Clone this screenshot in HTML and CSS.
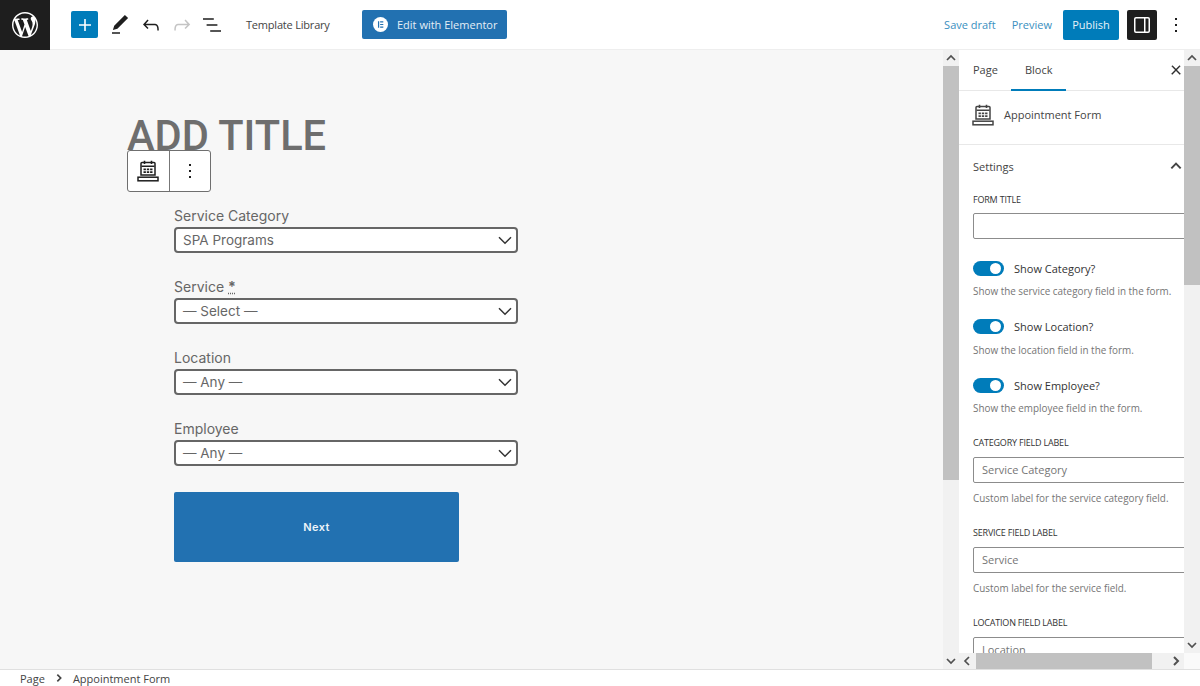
FILE: index.html
```html
<!DOCTYPE html>
<html>
<head>
<meta charset="utf-8">
<title>Edit Page</title>
<link rel="stylesheet" href="styles.css">
</head>
<body>
<svg class="defs" width="0" height="0">
  <symbol id="cal" viewBox="0 0 24 24">
    <path d="M6 3.500h12a1 1 0 0 1 1 1v11.500H5V4.500a1 1 0 0 1 1-1z" fill="none" stroke="currentColor" stroke-width="1.500"/>
    <path d="M8.500 1.800v3.200M15.500 1.800v3.200" stroke="currentColor" stroke-width="1.600"/>
    <path d="M5.500 6.500h13v1.500h-13z" fill="currentColor"/>
    <path d="M7.500 9.500h2.400v1.800H7.500zM10.800 9.500h2.400v1.800h-2.400zM14.100 9.500h2.400v1.800h-2.400zM7.500 12.200h2.400v1.800H7.500zM10.800 12.200h2.400v1.800h-2.400zM14.100 12.200h2.400v1.800h-2.400z" fill="currentColor"/>
    <rect x="2" y="18.200" width="20" height="3.600" fill="none" stroke="currentColor" stroke-width="1.500"/>
  </symbol>
  <symbol id="chev-down" viewBox="0 0 12 12"><path d="M2 4l4 4 4-4" fill="none" stroke="currentColor" stroke-width="1.700"/></symbol>
  <symbol id="chev-select" viewBox="0 0 12 12"><path d="M1.500 4l4.500 4.500L10.500 4" fill="none" stroke="currentColor" stroke-width="1.100"/></symbol>
  <symbol id="chev-up" viewBox="0 0 12 12"><path d="M2 8l4-4 4 4" fill="none" stroke="currentColor" stroke-width="1.700"/></symbol>
  <symbol id="chev-left" viewBox="0 0 12 12"><path d="M8 2L4 6l4 4" fill="none" stroke="currentColor" stroke-width="1.700"/></symbol>
  <symbol id="chev-right" viewBox="0 0 12 12"><path d="M4 2l4 4-4 4" fill="none" stroke="currentColor" stroke-width="2"/></symbol>
  <symbol id="dots" viewBox="0 0 24 24"><path d="M13 19h-2v-2h2v2zm0-6h-2v-2h2v2zm0-6h-2V5h2v2z" fill="currentColor"/></symbol>
</svg>

<header class="topbar">
  <a class="wp-logo">
    <svg width="26" height="26" viewBox="0 0 20 20"><path fill="#fff" d="M20 10c0-5.510-4.490-10-10-10C4.480 0 0 4.490 0 10c0 5.520 4.480 10 10 10 5.510 0 10-4.480 10-10zM7.780 15.370L4.370 6.220c.55-.02 1.170-.08 1.170-.08.5-.06.44-1.130-.06-1.110 0 0-1.450.11-2.370.11-.18 0-.37 0-.58-.01C4.120 2.690 6.870 1.110 10 1.110c2.330 0 4.450.87 6.050 2.340-.68-.11-1.650.39-1.650 1.580 0 .74.45 1.360.9 2.100.35.61.55 1.360.55 2.460 0 1.490-1.400 5-1.400 5l-3.030-8.370c.54-.02.82-.17.82-.17.5-.05.44-1.250-.06-1.220 0 0-1.440.12-2.380.12-.87 0-2.330-.12-2.330-.12-.5-.03-.56 1.200-.06 1.220l.92.08 1.260 3.410zM17.410 10c.24-.64.74-1.870.43-4.250.7 1.290 1.050 2.710 1.050 4.250 0 3.290-1.730 6.240-4.400 7.780.97-2.590 1.940-5.200 2.920-7.780zM6.100 18.090C3.120 16.650 1.110 13.530 1.110 10c0-1.300.23-2.480.72-3.590C3.250 10.300 4.670 14.200 6.100 18.090zm4.030-6.630l2.580 6.980c-.86.29-1.760.45-2.710.45-.79 0-1.570-.11-2.290-.33.81-2.380 1.620-4.740 2.420-7.100z"/></svg>
  </a>
  <div class="tools">
    <button class="add-btn"><svg width="24" height="24" viewBox="0 0 24 24"><path fill="#fff" d="M18 11.200h-5.200V6h-1.600v5.200H6v1.600h5.200V18h1.600v-5.200H18z"/></svg></button>
    <svg class="tool pencil" width="24" height="24" viewBox="0 0 24 24"><path d="M20.100 5.100L16.900 2 6.200 12.700l-1.300 4.400 4.500-1.300L20.100 5.100zM4 20.800h8v-1.500H4v1.500z"/></svg>
    <svg class="tool undo" width="24" height="24" viewBox="0 0 24 24"><path d="M18.300 11.700c-.6-.6-1.400-.9-2.300-.9H6.700l2.900-3.300-1.100-1-4.500 5L8.500 16l1-1-2.700-2.700H16c.5 0 .9.2 1.300.5 1 1 1 3.400 1 4.500v.3h1.500v-.2c0-1.500 0-4.300-1.500-5.700z"/></svg>
    <svg class="tool redo" width="24" height="24" viewBox="0 0 24 24"><path d="M15.600 6.500l-1.100 1 2.900 3.300H8c-.9 0-1.700.3-2.300.9-1.400 1.500-1.400 4.200-1.400 5.600v.2h1.500v-.3c0-1.100 0-3.500 1-4.500.3-.3.7-.5 1.300-.5h9.200L14.500 15l1.100 1.100 4.600-4.600-4.600-5z"/></svg>
    <svg class="tool list" width="24" height="24" viewBox="0 0 24 24"><path d="M13.800 5.200H3v1.500h10.800V5.200zm-3.600 12v1.500H21v-1.500H10.200zm7.200-6H6.600v1.500h10.800v-1.500z"/></svg>
    <span class="template-link">Template Library</span>
    <button class="elementor-btn">
      <svg width="15" height="15" viewBox="0 0 16 16"><circle cx="8" cy="8" r="8" fill="#fff"/><path fill="#2271b1" d="M5.300 4.500h1.300v7H5.300zM7.600 4.500h3.400v1.300H7.600zM7.600 7.350h3.400v1.300H7.600zM7.600 10.200h3.400v1.300H7.600z"/></svg>
      Edit with Elementor
    </button>
  </div>
  <div class="actions">
    <span class="link save-draft">Save draft</span>
    <span class="link preview">Preview</span>
    <button class="publish">Publish</button>
    <button class="settings-btn"><svg width="24" height="24" viewBox="0 0 24 24"><path fill="#fff" d="M18 4H6a2 2 0 0 0-2 2v12a2 2 0 0 0 2 2h12a2 2 0 0 0 2-2V6a2 2 0 0 0-2-2zM5.500 18V6c0-.3.2-.5.5-.5h8v13H6c-.3 0-.5-.2-.5-.5zm13 0c0 .3-.2.5-.5.5h-2.500v-13H18c.3 0 .5.2.5.5v12z"/></svg></button>
    <svg class="more" width="24" height="24"><use href="#dots"/></svg>
  </div>
</header>

<div class="workspace">
  <main class="canvas">
    <h1 class="post-title">ADD TITLE</h1>
    <div class="block-toolbar">
      <span class="bt-cell"><svg width="24" height="24"><use href="#cal"/></svg></span>
      <span class="bt-cell"><svg width="24" height="24"><use href="#dots"/></svg></span>
    </div>
    <form class="appt-form">
      <div class="field">
        <label>Service Category</label>
        <div class="select"><span>SPA Programs</span><svg width="16" height="16"><use href="#chev-select"/></svg></div>
      </div>
      <div class="field">
        <label>Service <abbr>*</abbr></label>
        <div class="select"><span>— Select —</span><svg width="16" height="16"><use href="#chev-select"/></svg></div>
      </div>
      <div class="field">
        <label>Location</label>
        <div class="select"><span>— Any —</span><svg width="16" height="16"><use href="#chev-select"/></svg></div>
      </div>
      <div class="field">
        <label>Employee</label>
        <div class="select"><span>— Any —</span><svg width="16" height="16"><use href="#chev-select"/></svg></div>
      </div>
      <button class="next-btn" type="button">Next</button>
    </form>
  </main>

  <div class="vbar vbar-canvas">
    <span class="arrow"><svg width="12" height="12"><use href="#chev-up"/></svg></span>
    <div class="track"><div class="thumb canvas-thumb"></div></div>
    <span class="arrow"><svg width="12" height="12"><use href="#chev-down"/></svg></span>
  </div>

  <aside class="sidebar">
    <div class="side-main">
      <div class="side-scroll">
        <div class="tabs">
          <span class="tab">Page</span>
          <span class="tab active">Block</span>
          <svg class="close" width="14" height="14" viewBox="0 0 24 24"><path fill="#1e1e1e" stroke="#1e1e1e" d="M13 11.800l6.100-6.300-1-1-6.100 6.200-6.100-6.200-1 1 6.100 6.300-6.500 6.700 1 1 6.500-6.600 6.500 6.600 1-1z"/></svg>
        </div>
        <div class="block-card">
          <svg width="24" height="24"><use href="#cal"/></svg>
          <span>Appointment Form</span>
        </div>
        <div class="panel">
          <div class="panel-head">
            <span>Settings</span>
            <svg width="14" height="14"><use href="#chev-up"/></svg>
          </div>
          <div class="text-field first">
            <div class="cap">FORM TITLE</div>
            <div class="input"></div>
          </div>
          <div class="toggle-row first-toggle">
            <span class="toggle"></span><span class="toggle-label">Show Category?</span>
          </div>
          <p class="help">Show the service category field in the form.</p>
          <div class="toggle-row">
            <span class="toggle"></span><span class="toggle-label">Show Location?</span>
          </div>
          <p class="help">Show the location field in the form.</p>
          <div class="toggle-row">
            <span class="toggle"></span><span class="toggle-label">Show Employee?</span>
          </div>
          <p class="help">Show the employee field in the form.</p>
          <div class="text-field">
            <div class="cap">CATEGORY FIELD LABEL</div>
            <div class="input">Service Category</div>
            <p class="help">Custom label for the service category field.</p>
          </div>
          <div class="text-field">
            <div class="cap">SERVICE FIELD LABEL</div>
            <div class="input">Service</div>
            <p class="help">Custom label for the service field.</p>
          </div>
          <div class="text-field">
            <div class="cap">LOCATION FIELD LABEL</div>
            <div class="input">Location</div>
          </div>
        </div>
      </div>
      <div class="vbar vbar-side">
        <span class="arrow"><svg width="12" height="12"><use href="#chev-up"/></svg></span>
        <div class="track"><div class="thumb side-thumb"></div></div>
        <span class="arrow"><svg width="12" height="12"><use href="#chev-down"/></svg></span>
      </div>
    </div>
    <div class="hbar">
      <span class="arrow"><svg width="12" height="12"><use href="#chev-left"/></svg></span>
      <div class="htrack"><div class="hthumb"></div></div>
      <span class="arrow"><svg width="12" height="12"><use href="#chev-right"/></svg></span>
      <span class="corner"></span>
    </div>
  </aside>
</div>

<footer class="crumbs">
  <span>Page</span>
  <svg width="10" height="10"><use href="#chev-right"/></svg>
  <span>Appointment Form</span>
</footer>
</body>
</html>
```

FILE: styles.css
```css
* {
  box-sizing: border-box;
}

html, body {
  margin: 0;
  height: 686px;
  overflow: hidden;
}

body {
  display: flex;
  flex-direction: column;
  background: #fff;
  color: #1e1e1e;
  font-family: "Open Sans", "Noto Sans", sans-serif;
  font-size: 11px;
}

button {
  border: none;
  padding: 0;
  font-family: inherit;
}

svg {
  display: block;
  flex: none;
}

.defs {
  position: absolute;
}

/* top bar */
.topbar {
  flex: none;
  height: 50px;
  display: flex;
  align-items: center;
  border-bottom: 1px solid #eee;
}

.wp-logo {
  width: 50px;
  height: 50px;
  background: #1e1e1e;
  display: flex;
  align-items: center;
  justify-content: center;
}

.tools {
  display: flex;
  align-items: center;
  margin-left: 21px;
}

.add-btn {
  width: 27px;
  height: 27px;
  background: #007cba;
  border-radius: 2px;
  display: flex;
  align-items: center;
  justify-content: center;
}

.tool {
  fill: #1e1e1e;
}

.pencil {
  margin-left: 10px;
}

.undo {
  margin-left: 7px;
}

.redo {
  margin-left: 7px;
  fill: #c4c4c4;
}

.list {
  margin-left: 6px;
}

.template-link {
  margin-left: 22px;
  letter-spacing: -0.2px;
  color: #444;
  width: 116px;
}

.elementor-btn {
  width: 145px;
  height: 29px;
  background: #2271b1;
  color: #e4eef6;
  border-radius: 2px;
  font-size: 11px;
  display: flex;
  align-items: center;
  gap: 9px;
  padding-left: 11px;
}

.actions {
  margin-left: auto;
  display: flex;
  align-items: center;
}

.link {
  color: #3a8fc0;
}

.preview {
  margin-left: 16px;
}

.publish {
  margin-left: 11px;
  width: 56px;
  height: 30px;
  background: #007cba;
  color: #e8f3f9;
  border-radius: 2px;
  font-size: 11px;
}

.settings-btn {
  margin-left: 8px;
  width: 30px;
  height: 30px;
  background: #1e1e1e;
  border-radius: 2px;
  display: flex;
  align-items: center;
  justify-content: center;
}

.more {
  margin: 0 12px 0 7px;
  color: #1e1e1e;
}

/* main area */
.workspace {
  flex: 1;
  min-height: 0;
  display: flex;
}

.canvas {
  position: relative;
  width: 943px;
  background: #f7f7f7;
  padding: 61px 0 0 127px;
}

.post-title {
  margin: 0;
  font-family: Roboto, sans-serif;
  font-weight: 500;
  font-size: 41.600px;
  line-height: 50px;
  color: #6e6e6e;
}

.block-toolbar {
  position: absolute;
  left: 127px;
  top: 100px;
  width: 84px;
  height: 42px;
  display: flex;
  background: #fff;
  border: 1px solid #6f6f6f;
  border-radius: 3px;
}

.bt-cell {
  flex: 1;
  display: flex;
  align-items: center;
  justify-content: center;
}

.bt-cell:first-child {
  border-right: 1px solid #777;
}

.appt-form {
  margin: 45px 0 0 47px;
  width: 344px;
  font-family: Inter, sans-serif;
  color: #666;
}

.field {
  margin-bottom: 24px;
}

.field label {
  display: block;
  font-size: 14px;
  line-height: 20px;
  height: 21px;
}

.field abbr {
  text-decoration: underline dotted;
  font-weight: 700;
}

.select {
  height: 26px;
  background: #fff;
  border: 2px solid #666;
  border-radius: 4px;
  padding: 0 3px 0 7px;
  display: flex;
  align-items: center;
  justify-content: space-between;
  font-size: 13.500px;
  color: #666;
}

.select svg {
  color: #333;
}

.next-btn {
  display: block;
  margin-top: 26px;
  width: 285px;
  height: 70px;
  background: #2271b1;
  color: #eef4f9;
  font-family: Inter, sans-serif;
  font-size: 11px;
  font-weight: 600;
  letter-spacing: 0.4px;
  border-radius: 2px;
}

.vbar {
  flex: none;
  width: 16px;
  background: #f1f1f1;
  display: flex;
  flex-direction: column;
}

.arrow {
  flex: none;
  width: 16px;
  height: 16px;
  display: flex;
  align-items: center;
  justify-content: center;
  color: #505050;
}

.track {
  flex: 1;
}

.thumb {
  background: #c1c1c1;
}

.canvas-thumb {
  height: 414px;
}

.side-thumb {
  height: 219px;
}

.sidebar {
  flex: none;
  width: 241px;
  display: flex;
  flex-direction: column;
  background: #fff;
}

.side-main {
  flex: 1;
  min-height: 0;
  display: flex;
}

.side-scroll {
  width: 225px;
  overflow: hidden;
}

.hbar {
  flex: none;
  height: 16px;
  display: flex;
  background: #f1f1f1;
}

.htrack {
  flex: 1;
}

.hthumb {
  margin-left: 1px;
  width: 176px;
  height: 16px;
  background: #c1c1c1;
}

.corner {
  width: 16px;
  background: #fafafa;
}

/* sidebar */
.tabs {
  height: 41px;
  position: relative;
  display: flex;
  border-bottom: 1px solid #e8e8e8;
  padding-left: 14px;
}

.tab {
  line-height: 40px;
  color: #444;
}

.tab.active {
  margin-left: 13px;
  padding: 0 14px;
  height: 41px;
  border-bottom: 2px solid #007cba;
}

.close {
  position: absolute;
  right: 1px;
  top: 13px;
}

.block-card {
  height: 54px;
  display: flex;
  align-items: center;
  gap: 9px;
  padding: 0 0 6px 12px;
  border-bottom: 1px solid #e8e8e8;
  color: #444;
}

.panel {
  padding-left: 14px;
}

.panel-head {
  height: 42px;
  display: flex;
  align-items: center;
  justify-content: space-between;
  padding-right: 1px;
  color: #444;
}

.cap {
  font-size: 9px;
  letter-spacing: -0.2px;
  line-height: 14px;
  height: 14px;
  margin-bottom: 6.500px;
  color: #333;
}

.input {
  width: 230px;
  height: 26px;
  border: 1px solid #8c8c8c;
  border-radius: 2px;
  padding-left: 8px;
  line-height: 23px;
  color: #757575;
}

.text-field.first {
  margin-top: 6px;
}

.text-field.first .cap {
  margin-bottom: 6px;
}

.toggle-row {
  display: flex;
  align-items: center;
  gap: 10px;
  height: 16px;
  margin-top: 20.500px;
}

.toggle-row.first-toggle {
  margin-top: 21px;
}

.toggle {
  position: relative;
  width: 31px;
  height: 15px;
  border-radius: 8px;
  background: #007cba;
}

/* the white knob */
.toggle::after {
  content: "";
  position: absolute;
  right: 3px;
  top: 2px;
  width: 11px;
  height: 11px;
  border-radius: 50%;
  background: #fff;
}

.toggle-label {
  color: #333;
}

.help {
  margin: 8px 0 0;
  font-size: 9.900px;
  line-height: 14px;
  color: #757575;
  white-space: nowrap;
}

.text-field {
  margin-top: 21px;
}

.text-field .help {
  margin-top: 8.500px;
}

/* bottom crumbs */
.crumbs {
  flex: none;
  height: 17px;
  display: flex;
  align-items: center;
  gap: 9px;
  padding-left: 20px;
  border-top: 1px solid #e0e0e0;
  color: #444;
}
```
